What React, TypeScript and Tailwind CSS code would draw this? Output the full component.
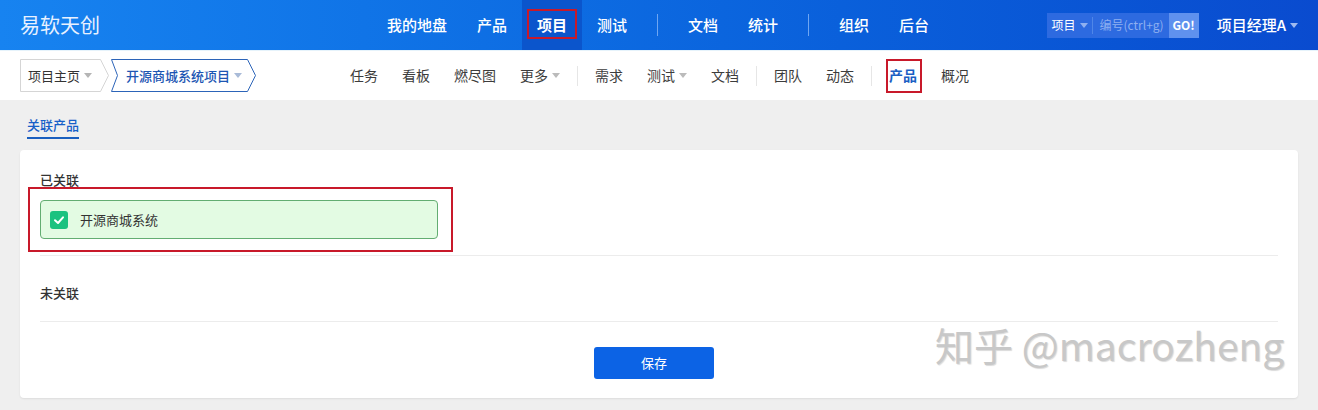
const Caret = ({ color = '#bbb' }: { color?: string }) => (
  <svg width="8" height="5" viewBox="0 0 8 5" className="ml-[4px]">
    <path d="M0 0 L8 0 L4 5 Z" fill={color} />
  </svg>
);

const topNav = ['我的地盘', '产品', '项目', '测试', '|', '文档', '统计', '|', '组织', '后台'];

const subNav = [
  { t: '任务' },
  { t: '看板' },
  { t: '燃尽图' },
  { t: '更多', caret: true },
  { t: '|' },
  { t: '需求' },
  { t: '测试', caret: true },
  { t: '文档' },
  { t: '|' },
  { t: '团队' },
  { t: '动态' },
  { t: '|' },
  { t: '产品', active: true },
  { t: '概况' },
];

const Header = () => (
  <header className="h-[50px] flex items-center bg-linear-to-r from-[#1783f0] to-[#0a4bcf] text-white">
    <div className="pl-[20px] w-[372px] text-[20px] text-[#e8f1ff] leading-none">易软天创</div>
    <nav className="flex items-center h-full">
      {topNav.map((t, i) =>
        t === '|' ? (
          <span key={i} className="w-px h-[22px] bg-[#6fa6f2] mx-[15px]" />
        ) : t === '项目' ? (
          <a key={i} className="relative h-full px-[15px] flex items-center bg-[#0b55cc] text-[15px] font-bold">
            {t}
            <span className="absolute left-[5px] right-[5px] top-[9px] bottom-[11px] border-2 border-[#c8192a]" />
          </a>
        ) : (
          <a key={i} className="h-full px-[15px] flex items-center text-[15px] font-medium">
            {t}
          </a>
        )
      )}
    </nav>
    <div className="ml-auto flex items-center">
      <div className="flex items-center h-[25px] bg-[#2d6ae0] text-[12px]">
        <span className="flex items-center pl-[5px] pr-[4px]">
          项目<Caret color="#8fb0f0" />
        </span>
        <span className="w-px h-[17px] bg-[#4f86e8]" />
        <span className="pl-[7px] pr-[5px] text-[#8eaff0]">编号(ctrl+g)</span>
        <span className="h-full w-[30px] flex items-center justify-center bg-[#5f91ee] font-bold text-[12px]">GO!</span>
      </div>
      <div className="flex items-center ml-[18px] mr-[20px] text-[15px] font-medium">
        项目经理A<Caret color="#9fbaf0" />
      </div>
    </div>
  </header>
);

const Crumb = ({ first, children }: { first?: boolean; children: React.ReactNode }) => (
  <div className={`relative h-[33px] flex items-center ${first ? 'w-[89px] pl-[8px]' : 'w-[145px] pl-[15px] ml-[2px]'}`}>
    <svg className="absolute inset-0 w-full h-full" viewBox={first ? '0 0 89 33' : '0 0 145 33'} preserveAspectRatio="none">
      {first ? (
        <path d="M0.5 0.5 H80.5 L88.5 16.5 L80.5 32.5 H0.5 Z" fill="#fff" stroke="#d5d5d5" />
      ) : (
        <path d="M0.5 0.5 H136.5 L144.5 16.5 L136.5 32.5 H0.5 L6.5 16.5 Z" fill="#fff" stroke="#2c64b8" />
      )}
    </svg>
    <span className="relative flex items-center">{children}</span>
  </div>
);

const SubBar = () => (
  <div className="h-[50px] bg-white flex items-center border-t border-[#e6f3fb]">
    <div className="flex items-center pl-[20px] w-[338px]">
      <Crumb first>
        <span className="text-[13px] text-[#333]">项目主页</span>
        <Caret color="#b5b5b5" />
      </Crumb>
      <Crumb>
        <span className="text-[13px] text-[#1d56b3] font-medium">开源商城系统项目</span>
        <Caret color="#a9bbd8" />
      </Crumb>
    </div>
    <nav className="flex items-center h-full text-[14px] text-[#3c3c3c]">
      {subNav.map((n, i) =>
        n.t === '|' ? (
          <span key={i} className="w-px h-[20px] bg-[#e6e6e6] mx-[5px]" />
        ) : n.active ? (
          <a key={i} className="relative px-[12px] flex items-center text-[#1c5fc4] font-bold">
            {n.t}
            <span className="absolute left-[9px] right-[7px] -top-[6px] -bottom-[7px] border-2 border-[#c8192a]" />
          </a>
        ) : (
          <a key={i} className="px-[12px] flex items-center">
            {n.t}
            {n.caret && <Caret color="#bbb" />}
          </a>
        )
      )}
    </nav>
  </div>
);

export default function App() {
  return (
    <div className="relative w-[1318px] h-[410px] overflow-hidden bg-[#efefef] font-['Noto_Sans_CJK_SC','Liberation_Sans',sans-serif]">
      <Header />
      <SubBar />
      <div className="h-[50px] pl-[27px] flex items-start pt-[15px]">
        <div className="flex flex-col">
          <span className="text-[13px] leading-[20px] text-[#1660c8] font-medium">关联产品</span>
          <span className="mt-[2px] h-[2px] bg-[#1a5fbf]" />
        </div>
      </div>
      <section className="mx-[20px] h-[248px] bg-white rounded-[4px] shadow-[0_1px_2px_rgba(0,0,0,0.08)] px-[20px]">
        <div className="pt-[20px] pb-[16px] border-b border-[#ececec]">
          <h3 className="text-[13px] leading-[20px] text-[#333] font-medium">已关联</h3>
          <div className="relative mt-[10px] w-[398px] h-[39px] flex items-center rounded-[4px] border border-[#63ad72] bg-[#e3fbe3] pl-[9px]">
            <span className="w-[18px] h-[18px] rounded-[3px] bg-[#1bc27f] flex items-center justify-center">
              <svg width="12" height="12" viewBox="0 0 12 12">
                <path d="M2 6.2 L5 9 L10 3.3" fill="none" stroke="#fff" strokeWidth="2" strokeLinecap="round" strokeLinejoin="round" />
              </svg>
            </span>
            <span className="ml-[12px] text-[13px] text-[#333]">开源商城系统</span>
            <span className="absolute -left-[13px] -right-[16px] -top-[14px] -bottom-[14px] border-2 border-[#c8192a]" />
          </div>
        </div>
        <div className="pt-[27px] pb-[18px] border-b border-[#ececec]">
          <h3 className="text-[13px] leading-[20px] text-[#333] font-medium">未关联</h3>
        </div>
        <div className="flex justify-center pt-[25px] pr-[10px]">
          <button className="w-[120px] h-[32px] rounded-[3px] bg-[#0c63e5] text-white text-[13px]">保存</button>
        </div>
      </section>
      <div className="absolute left-[935px] top-[325px] text-[39px] leading-none text-[#c8c8c8] [text-shadow:1px_1px_1px_rgba(0,0,0,0.15)] whitespace-nowrap">
        知乎 @macrozheng
      </div>
    </div>
  );
}
